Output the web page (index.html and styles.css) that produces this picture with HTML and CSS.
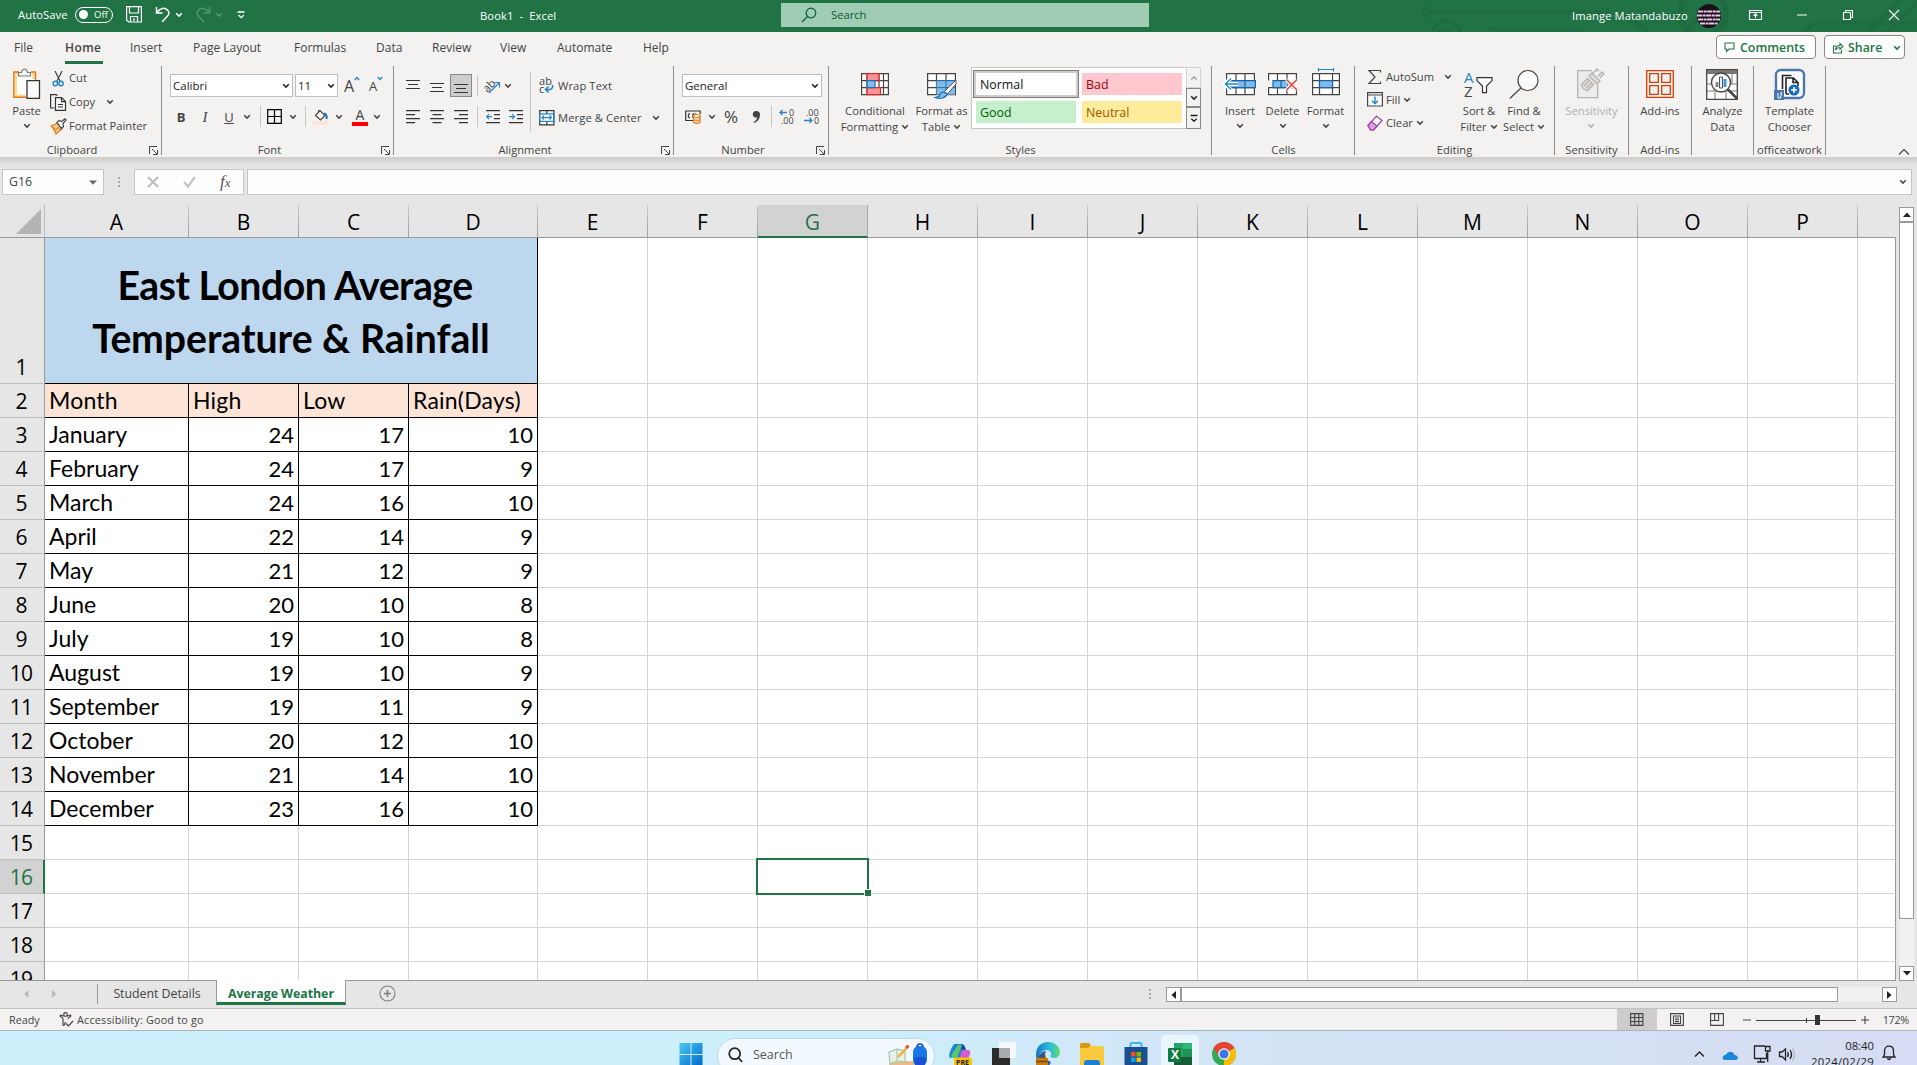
FILE: index.html
```html
<!DOCTYPE html>
<html lang="en">
<head>
<meta charset="utf-8">
<title>Book1 - Excel</title>
<link rel="stylesheet" href="styles.css">
</head>
<body>
<svg class="defs" width="0" height="0">
  <symbol id="chev" viewBox="0 0 8 6"><path d="M1.2 1.3 4 4.1 6.8 1.3" fill="none" stroke="currentColor" stroke-width="1.5"/></symbol>
  <symbol id="launch" viewBox="0 0 9 9"><path d="M.5 8V.5H8M3 3l5 5M8.500 4v4.500H4" fill="none" stroke="#444" stroke-width="1"/></symbol>
  <symbol id="lens" viewBox="0 0 16 16"><circle cx="10" cy="6" r="4.800" fill="none" stroke="currentColor" stroke-width="1.200"/><path d="M6.500 9.500 1 15" stroke="currentColor" stroke-width="1.200"/></symbol>
</svg>

<header class="title">
  <svg class="circuit" width="517" height="32" viewBox="1400 0 517 32" fill="none" stroke="#1f6b42" stroke-width="4">
    <circle cx="1426" cy="12" r="3.500" stroke-width="3"/><path d="M1431 12.500H1600M1497 31H1587"/><circle cx="1604" cy="12" r="4" stroke-width="3"/>
    <circle cx="1446" cy="36" r="15"/><path d="M1437 31h16"/><circle cx="1492" cy="31" r="3.500" stroke-width="3"/>
    <path d="M1622 13 1648 32" stroke-width="5"/><circle cx="1703" cy="13" r="23" stroke-width="6"/><path d="M1690 26l16-16h-12M1706 10v12"/>
    <path d="M1803 34l11-11H1917M1866 34l34-34M1885 34l34-34"/>
  </svg>
  <span class="autosave">AutoSave</span>
  <span class="toggle"><i></i>Off</span>
  <svg class="save" width="16" height="17" fill="none" stroke="#fff" stroke-width="1.200"><path d="M.6.6h14.800v15.400H2.600l-2-2zM3.500.6v6.400h9V.6M4.500 16v-5.500h7V16M8 12v3"/></svg>
  <svg class="undo" width="16" height="17" fill="none" stroke="#fff" stroke-width="1.500"><path d="M1.500 1v6h6M2 6.500C5 2 9.500 1 12.500 4c2 2.200 1.500 4.500 0 6L7 16"/></svg>
  <svg class="chev w1"><use href="#chev"/></svg>
  <svg class="undo redo" width="16" height="17" fill="none" stroke="#4f9770" stroke-width="1.500"><path d="M14.500 1v6h-6M14 6.500C11 2 6.500 1 3.500 4c-2 2.200-1.500 4.500 0 6L9 16"/></svg>
  <svg class="chev w2"><use href="#chev"/></svg>
  <svg class="qat" width="9" height="8" fill="none" stroke="#fff" stroke-width="1.300"><path d="M.5 1h7M1.500 4l2.700 2.700L7 4"/></svg>
  <span class="doc">Book1&nbsp; -&nbsp; Excel</span>
  <div class="search"><svg width="16" height="16"><use href="#lens"/></svg><span>Search</span></div>
  <span class="user">Imange Matandabuzo</span>
  <svg class="avatar" width="24" height="24"><defs><clipPath id="av"><circle cx="12" cy="12" r="12"/></clipPath></defs><g clip-path="url(#av)"><path fill="#17111a" d="M0 0h24v24H0z"/><path d="M1 7.500h22M0 11.500h24M1 15.500h22M3 19.500h18" stroke="#eac6e6" stroke-width="1.800" stroke-dasharray="5 .6 3 .5"/></g></svg>
  <svg class="wbtns" width="155" height="16" fill="none" stroke="#fff" stroke-width="1.100"><path d="M1.500 3.500h12v9h-12zM1.500 5.500h12M7.500 11V7M5.500 8.800l2-2 2 2M49 8h10M95.500 5.500h7v7h-7zM97.500 5.500v-2h7v7h-2M141 3l10 10M151 3l-10 10"/></svg>
</header>

<nav class="tabs">
  <div class="tablist"><span>File</span><b>Home</b><span>Insert</span><span>Page Layout</span><span>Formulas</span><span>Data</span><span>Review</span><span>View</span><span>Automate</span><span>Help</span></div>
  <div class="pill comments"><svg width="11" height="11" fill="none" stroke="#217346" stroke-width="1.100"><path d="M1 1h9v6H5L2.500 9.500V7H1z"/></svg>Comments</div>
  <div class="pill share"><svg width="12" height="12" fill="none" stroke="#217346" stroke-width="1.100"><path d="M4 4H1.500v7h8V8M3.500 8c.3-3 2-4.500 4.500-4.500V1.500L11 4.500 8 7.300V5.500C6 5.500 4.500 6.300 3.500 8z"/></svg>Share<svg class="chev"><use href="#chev"/></svg></div>
</nav>

<section class="ribbon">
  <div class="group g-clip">
    <div class="body">
      <div class="big paste"><svg width="28" height="31" fill="none"><path d="M1.500 5.500h20v23h-20z" fill="#fff"/><path d="M7 5.500H2.500v22.500H13M19 5.500h2V11" stroke="#f9dc9c" stroke-width="3"/><path d="M6 4H.8v25.200H13M18 4h4.500v8" stroke="#e07b1a" stroke-width="1.400"/><path d="M5.500 8V4.500h3C9 2 10 1 11.500 1s2.500 1 3 3.500h3V8z" fill="#f7f7f7" stroke="#777" stroke-width="1.200"/><path d="M14 12.700h12.500v17.600H14z" fill="#fafafa" stroke="#333" stroke-width="1.300"/></svg><span>Paste</span><svg class="chev"><use href="#chev"/></svg></div>
      <div class="stack">
        <div class="cmd"><svg width="17" height="17" fill="none"><path d="M5 1l5.500 11M12 1L6.500 12" stroke="#444" stroke-width="1.200"/><circle cx="5.300" cy="13.500" r="2.200" stroke="#2586c7" stroke-width="1.400"/><circle cx="11" cy="13.500" r="2.200" stroke="#2586c7" stroke-width="1.400"/></svg><span>Cut</span></div>
        <div class="cmd"><svg width="17" height="17" fill="none" stroke="#333" stroke-width="1.200"><path d="M4.500 14H.6V.6h5.800l1 1"/><path d="M5.500 3.600h6l4 4v8.800h-10z" fill="#fafafa"/><path d="M11.500 3.600v4h4M8 10.500h5M8 13h5"/></svg><span>Copy</span><svg class="chev gap"><use href="#chev"/></svg></div>
        <div class="cmd"><svg width="17" height="17" fill="none"><path d="M1 8l7-3 4 6-6 5c0-2-1-2.500-2-4l-1-2z" fill="#f6c98a" stroke="#e07b1a" stroke-width="1.200"/><path d="M3 9l3 3 2-3 2 3" stroke="#e07b1a"/><path d="M7 4.500l2-2 2.500 1L15 .8l1 1.200-3 3.500.5 3-2 2z" fill="#fff" stroke="#444" stroke-width="1.200"/></svg><span>Format Painter</span></div>
      </div>
    </div>
    <div class="label"><span>Clipboard</span><svg class="launch"><use href="#launch"/></svg></div>
  </div>

  <div class="group g-font">
    <div class="rows">
      <div class="row r1"><div class="combo"><span>Calibri</span><svg class="chev"><use href="#chev"/></svg></div><div class="combo"><span>11</span><svg class="chev"><use href="#chev"/></svg></div><div class="grow1">A<svg width="6" height="5" fill="none" stroke="#2586c7" stroke-width="1.300"><path d="M.8 4 3 1.500 5.200 4"/></svg></div><div class="grow2">A<svg width="6" height="5" fill="none" stroke="#2586c7" stroke-width="1.300"><path d="M.8 1 3 3.500 5.200 1"/></svg></div></div>
      <div class="row r2"><b>B</b><em>I</em><u>U</u><svg class="chev"><use href="#chev"/></svg><i class="vs"></i><svg width="15" height="15" fill="none" stroke="#000" stroke-width="1.200"><path d="M.7.7h13.600v13.600H.7zM7.500 1v13M1 7.500h13"/></svg><svg class="chev"><use href="#chev"/></svg><i class="vs"></i>
        <svg width="16" height="16" fill="none"><path d="M2.500 6.500 7 1.500l5 5-4.500 4.500zM5.500 3V1" stroke="#444" stroke-width="1.200"/><path d="M11 4.500c2 .5 3 2.500 2.500 5.500" stroke="#1f6fb5" stroke-width="2"/><path d="M0 12h16v4H0z" fill="#fce4d6"/></svg><svg class="chev"><use href="#chev"/></svg>
        <div class="fcol">A<i></i></div><svg class="chev"><use href="#chev"/></svg></div>
    </div>
    <div class="label"><span>Font</span><svg class="launch"><use href="#launch"/></svg></div>
  </div>

  <div class="group g-align">
    <div class="rows two">
      <div class="left">
        <div class="row r1"><svg width="14" height="14"><path d="M0 1.500h14M2 5.500h10M0 9.500h14" /></svg><svg width="14" height="14"><path d="M0 4.500h14M2 8.500h10M0 12.500h14"/></svg><div class="on"><svg width="14" height="14"><path d="M0 5.500h14M2 9.500h10M0 13.500h14"/></svg></div><i class="vs"></i>
          <svg width="17" height="16" class="orient"><text x="-1" y="11" transform="rotate(-45 6 8)" font-size="11">ab</text><path d="M5 15 15 5M10.500 4.500H15.500V9.500" style="stroke:#2586c7"/></svg><svg class="chev"><use href="#chev"/></svg></div>
        <div class="row r2"><svg width="14" height="14"><path d="M0 .7h14M0 4.700h9M0 8.700h14M0 12.700h9"/></svg><svg width="14" height="14"><path d="M0 .7h14M2.500 4.700h9M0 8.700h14M2.500 12.700h9"/></svg><svg width="14" height="14"><path d="M0 .7h14M5 4.700h9M0 8.700h14M5 12.700h9"/></svg><i class="vs"></i><svg width="14" height="14"><path d="M0 .7h14M8 4.700h6M8 8.700h6M0 12.700h14"/><path d="M.7 6.700H6M3 4.200.7 6.700 3 9.200" style="stroke:#2586c7"/></svg><svg width="14" height="14"><path d="M0 .7h14M8 4.700h6M8 8.700h6M0 12.700h14"/><path d="M0 6.700h5.500M3 4.200l2.500 2.500L3 9.200" style="stroke:#2586c7"/></svg></div>
      </div>
      <div class="right">
        <div class="cmd"><svg width="16" height="17" class="wrap"><text x="0" y="8" font-size="11">ab</text><text x="0" y="16" font-size="11">c</text><path d="M13.500 8c1 3-1 5-6 4.500M9.500 9.500l-3 3 3 3" style="stroke:#2586c7;stroke-width:1.600"/></svg><span>Wrap Text</span></div>
        <div class="cmd"><svg width="16" height="16"><path d="M.7.7h14.200v14.200H.7zM7.800.7v3M7.800 12v3" style="fill:#fff"/><path d="M.7 3.800h14.200v7.600H.7zM3 7.600h9.500M5 5.500 3 7.600l2 2.100M10.500 5.500l2 2.100-2 2.100" style="stroke:#2586c7"/></svg><span>Merge &amp; Center</span><svg class="chev gap"><use href="#chev"/></svg></div>
      </div>
    </div>
    <div class="label"><span>Alignment</span><svg class="launch"><use href="#launch"/></svg></div>
  </div>

  <div class="group g-num">
    <div class="rows">
      <div class="row r1"><div class="combo"><span>General</span><svg class="chev"><use href="#chev"/></svg></div></div>
      <div class="row r2"><svg width="17" height="14" fill="none"><path d="M8 10.500H.7V1h14.500v3M5 3.500c-2 0-2.500 4.500 0 4.500M8 8V4h3M8 6h2" stroke="#333" stroke-width="1.200"/><path d="M8.500 6.500v5c0 2.500 6.500 2.500 6.500 0v-5z" fill="#fbd9b0" stroke="#e07b1a" stroke-width="1.200"/><ellipse cx="11.800" cy="6" rx="3.400" ry="1.500" fill="#fff" stroke="#e07b1a" stroke-width="1.200"/><path d="M8.500 9c0 2 6.500 2 6.500 0" stroke="#e07b1a"/></svg><svg class="chev"><use href="#chev"/></svg><span class="pct">%</span>
        <svg width="9" height="14"><path d="M4 1a3.400 3.400 0 0 1 4 3.500C8 8.500 5.500 12 2 13l-.5-1C3.500 11 4.800 9.500 5 7.500 2.500 8 .8 6.500.8 4.400.8 2.500 2 1 4 1z" fill="#444"/></svg><i class="vs"></i>
        <svg width="17" height="18" class="dec"><text x="10" y="7.500">0</text><text x="2" y="16">.00</text><path d="M1 4.500h7M3.500 2 1 4.500 3.500 7"/></svg><svg width="17" height="18" class="dec"><text x="2" y="7.500">.00</text><text x="10" y="16">0</text><path d="M0 12.500h8M5.500 10 8 12.500 5.500 15"/></svg></div>
    </div>
    <div class="label"><span>Number</span><svg class="launch"><use href="#launch"/></svg></div>
  </div>

  <div class="group g-styles">
    <div class="body">
      <div class="big"><svg width="28" height="31" fill="none"><path d="M.6 5.600h26.800v21H.6zM.6 12.600h26.800M.6 19.600h26.800M6 5v21M18 5v21M22.500 5v21" fill="#fff" stroke="#444" stroke-width="1.200"/><path d="M6 5.600h12v7H6zM6 19.600h13.500v7H6z" fill="#ff9096" stroke="#d92b2b" stroke-width="1.200"/><path d="M6 12.600h8v7H6z" fill="#83bbe8" stroke="#1f6fb5" stroke-width="1.200"/></svg><span>Conditional</span><span>Formatting <svg class="chev"><use href="#chev"/></svg></span></div>
      <div class="big fat"><svg width="30" height="31" fill="none"><path d="M.6 5.600h27.800v21H.6zM.6 12.600h27.800M.6 19.600h27.800M9.500 5v21M19 5v21" fill="#fff" stroke="#444" stroke-width="1.200"/><path d="M9.500 12.600H28v14H9.500z" fill="#83bbe8"/><path d="M9.500 12.600H28M9.500 19.600H28M19 12v14" stroke="#1f6fb5"/><path d="M29 12 17.500 23.500l3 2.500L29 16z" fill="#fff" stroke="#555"/><path d="M17 24c-3 0-4 2-4.500 4L8 29.500c5 2 11 .500 12-3.500z" fill="#83bbe8" stroke="#1f6fb5" stroke-width="1.200"/></svg><span>Format as</span><span>Table <svg class="chev"><use href="#chev"/></svg></span></div>
      <div class="gallery">
        <div class="swatches"><div class="sw normal">Normal</div><div class="sw bad">Bad</div><div class="sw good">Good</div><div class="sw neutral">Neutral</div></div>
        <div class="gscroll"><div class="off"><svg class="chev up"><use href="#chev"/></svg></div><div><svg class="chev"><use href="#chev"/></svg></div><div><svg width="8" height="9" fill="none" stroke="#222" stroke-width="1.300"><path d="M.5 1.500h7M1.300 4.700 4 7.300l2.700-2.600"/></svg></div></div>
      </div>
    </div>
    <div class="label"><span>Styles</span></div>
  </div>

  <div class="group g-cells">
    <div class="body">
      <div class="big"><svg width="32" height="31" fill="none"><path d="M2.600 5.600h27.800v21H2.600zM2.600 12.600h27.800M2.600 19.600h27.800M12 5v21M21 5v21" fill="#fff" stroke="#444" stroke-width="1.200"/><path d="M6 12.600h25.400v7H6zM21 12.600v7" fill="#83bbe8" stroke="#1563a8" stroke-width="1.200"/><path d="M14 16H1.500M7 10 1 16l6 6" stroke="#fff" stroke-width="4"/><path d="M14 16H1.500M7 10.500 1.500 16 7 21.500" stroke="#2586c7" stroke-width="1.400"/></svg><span>Insert</span><svg class="chev"><use href="#chev"/></svg></div>
      <div class="big"><svg width="30" height="31" fill="none"><path d="M.6 26.600v-7h27.800v7zM.6 12.600v-7h27.800v7M9.500 5v21M19 5v21" fill="#fff" stroke="#444" stroke-width="1.200"/><path d="M5 12.600h15v7H5zM13 12.600v7" fill="#83bbe8" stroke="#1563a8" stroke-width="1.200"/><path d="M18.500 11.500 29 22M29 11.500 18.500 22" stroke="#f3f2f1" stroke-width="4"/><path d="M18.500 11.500 29 22M29 11.500 18.500 22" stroke="#e33c3c" stroke-width="1.400"/></svg><span>Delete</span><svg class="chev"><use href="#chev"/></svg></div>
      <div class="big"><svg width="28" height="31" fill="none"><path d="M.6 5.600h26.800v21H.6zM.6 12.600h26.800M.6 19.600h26.800M7.500 5v21M20.500 5v21" fill="#fff" stroke="#444" stroke-width="1.200"/><path d="M7.500 12.600h13v7h-13z" fill="#83bbe8" stroke="#1563a8" stroke-width="1.200"/><path d="M6.500 1.500h15M6.500 0v3.500M21.500 0v3.500" stroke="#2586c7" stroke-width="1.200"/></svg><span>Format</span><svg class="chev"><use href="#chev"/></svg></div>
    </div>
    <div class="label"><span>Cells</span></div>
  </div>

  <div class="group g-edit">
    <div class="body">
      <div class="stack">
        <div class="cmd"><svg width="16" height="16" fill="none" stroke="#444" stroke-width="1.200"><path d="M13.500 3.500V1.500H2L8 8l-6 6.500h11.500v-2"/></svg><span>AutoSum</span><svg class="chev gap"><use href="#chev"/></svg></div>
        <div class="cmd"><svg width="16" height="15" fill="none"><path d="M.6.6h14.800v13.400H.6zM.6 3h14.800" fill="#fff" stroke="#444" stroke-width="1.200"/><path d="M8 4.500v7M5 8.800l3 3 3-3" stroke="#2586c7" stroke-width="1.400"/></svg><span>Fill</span><svg class="chev"><use href="#chev"/></svg></div>
        <div class="cmd"><svg width="16" height="16" fill="none" stroke="#9b3fa5" stroke-width="1.200"><path d="M1 10.500 9.500 1l5.500 4.500L6.500 15h-3z" fill="#fff"/><path d="M1 10.500 4.500 6.500l5.500 4.500L6.500 15h-3z" fill="#dba0de"/></svg><span>Clear</span><svg class="chev"><use href="#chev"/></svg></div>
      </div>
      <div class="big sort"><svg width="30" height="31" fill="none"><text x="0" y="15" font-size="15" fill="#2586c7">A</text><text x="0" y="29" font-size="15" fill="#444">Z</text><path d="M13 9.600h15v3l-5.500 5.500v6.500h-4v-6.500L13 12.600z" fill="#fff" stroke="#333" stroke-width="1.200"/></svg><span>Sort &amp;</span><span>Filter <svg class="chev"><use href="#chev"/></svg></span></div>
      <div class="big find"><svg width="30" height="31" fill="none" stroke="#444" stroke-width="1.200"><circle cx="19" cy="12.500" r="10" fill="#fafafa"/><path d="M12 20 .8 30.500"/></svg><span>Find &amp;</span><span>Select <svg class="chev"><use href="#chev"/></svg></span></div>
    </div>
    <div class="label"><span>Editing</span></div>
  </div>

  <div class="group g-sens">
    <div class="body"><div class="big dim"><svg width="28" height="31" fill="none" stroke="#b5b3b1" stroke-width="1.300"><path d="M15 2.600H.7v27h20V17" fill="#ececec"/><path d="M4.500 16.500l6-6 6 6-6 6c-3 0-6-3-6-6zM7 18l5-5M9.500 20l5-5M12 8l3-3 8 8-3 3zM16 5l4-4 2 2M21 8l4-4 2 2-4 4" fill="#dedddc"/></svg><span>Sensitivity</span><svg class="chev"><use href="#chev"/></svg></div></div>
    <div class="label"><span>Sensitivity</span></div>
  </div>

  <div class="group g-add">
    <div class="body"><div class="big"><svg width="28" height="31" fill="none" stroke="#d83b01" stroke-width="1.300"><path d="M.7 2.700h26.600v26.600H.7zM3.700 5.700h8.600v8.600H3.700zM15.700 5.700h8.600v8.600h-8.600zM3.700 17.700h8.600v8.600H3.700zM15.700 17.700h8.600v8.600h-8.600z"/></svg><span>Add-ins</span></div></div>
    <div class="label"><span>Add-ins</span></div>
  </div>

  <div class="group g-ana">
    <div class="body"><div class="big"><svg width="32" height="33" fill="none"><path d="M.7 1.600h30.600v29.800H.7z" fill="#fff" stroke="#444" stroke-width="1.300"/><path d="M1 2h30v4H1z" fill="#777"/><path d="M1 16h5M1 23h30M25 16h6M9 24v7M20 24v7M26 6v10" stroke="#777"/><circle cx="15" cy="14.500" r="9.500" fill="#fff" stroke="#444" stroke-width="1.400"/><path d="M9.500 14h3v5h-3z" fill="#888"/><path d="M13.500 9h3v11h-3z" fill="#eee" stroke="#555"/><path d="M17.500 11h3v8h-3z" fill="#3a96dd"/><path d="M22 21.500l9 9" stroke="#444" stroke-width="2.500"/></svg><span>Analyze</span><span>Data</span></div></div>
    <div class="label"></div>
  </div>

  <div class="group g-tpl">
    <div class="body"><div class="big"><svg width="32" height="33" fill="none"><rect x="2" y="2" width="28" height="28" rx="5" fill="#fff" stroke="#4a78ad" stroke-width="2.400"/><path d="M8.500 21V7.500h9M12 26V10h7.500l4.500 4.500V18M12 26h3M19 10.500v4h5" stroke="#222" stroke-width="1.600"/><circle cx="20" cy="22" r="5.500" fill="#1368b8"/><path d="M20 19v6M17 22h6" stroke="#fff" stroke-width="1.600"/><path d="M0 22h10v10H0z" fill="#4a78ad"/><path d="M4 25v5h2.500l1-5M6 25h2" stroke="#fff"/></svg><span>Template</span><span>Chooser</span></div></div>
    <div class="label"><span>officeatwork</span></div>
  </div>
  <svg class="collapse" width="12" height="8" fill="none" stroke="#444" stroke-width="1.200"><path d="M1 6.500 6 1.500l5 5"/></svg>
</section>

<section class="fbar">
  <div class="box name"><span>G16</span><svg width="8" height="5"><path d="M0 .5h8L4 4.800z" fill="#666"/></svg></div>
  <i class="dots"></i>
  <div class="box fx"><svg width="12" height="12" fill="none" stroke="#bbb" stroke-width="1.800"><path d="M1 1l10 10M11 1 1 11"/></svg><svg width="13" height="12" fill="none" stroke="#c4c4c4" stroke-width="2.200"><path d="M1 6l4 4.500L12 1"/></svg><span>f<small>x</small></span></div>
  <div class="box formula"><svg class="chev"><use href="#chev"/></svg></div>
</section>

<main class="work">
  <div class="sheet" id="sheet"></div>
  <div class="vscroll"><div class="sbtn"><svg width="8" height="5"><path d="M0 5h8L4 .5z"/></svg></div><div class="thumb"></div><div class="sbtn"><svg width="8" height="5"><path d="M0 0h8L4 4.500z"/></svg></div></div>
</main>

<footer class="sheets">
  <div class="arrows"><svg width="30" height="8" fill="#b9b9b9"><path d="M4.500 0v8L0 4zM28 0v8l4.500-4z"/></svg></div>
  <span class="tab">Student Details</span><span class="tab active">Average Weather</span>
  <svg class="plus" width="17" height="17" fill="none" stroke="#808080"><circle cx="8.500" cy="8.500" r="7.500" stroke-width="1.100"/><path d="M8.500 5v7M5 8.500h7" stroke-width="1.700"/></svg>
  <i class="dots"></i>
  <div class="hscroll"><div class="sbtn"><svg width="5" height="8"><path d="M5 0v8L.5 4z"/></svg></div><div class="thumb"></div><div class="sbtn"><svg width="5" height="8"><path d="M0 0v8l4.500-4z"/></svg></div></div>
</footer>

<footer class="status">
  <span class="ready">Ready</span>
  <svg class="acc" width="15" height="15" fill="none" stroke="#444" stroke-width="1.200"><circle cx="6.500" cy="2.500" r="1.800"/><path d="M1 3.500c0 2 3 1.500 3 3.500v6c1 1 2 0 2-3M12 3.500c0 2-3 1.500-3 3.500M1 3.500c1-1 2 .5 4 .5M12 3.500c-1-1-2 .5-4 .5M7 11.500l2.500 2.500 4.500-5"/></svg>
  <span class="acct">Accessibility: Good to go</span>
  <div class="view on"><svg width="14" height="13"><path d="M.6.6h12.300v11.800H.6zM4.700.6v12M8.800.6v12M.6 4.500h12.300M.6 8.500h12.300"/></svg></div>
  <div class="view"><svg width="14" height="13"><path d="M.6.6h12.800v11.800H.6zM3.500 3h7v7.500h-7zM5 5h4M5 6.800h4M5 8.600h4"/></svg></div>
  <div class="view"><svg width="14" height="13"><path d="M.6.6h12.800v11.800H.6zM.6 7.500h8V.6M4.700.6v7"/></svg></div>
  <svg class="zoom" width="130" height="14"><path d="M3 7h8M121 7h8M125 3v8M16 7.500h100M66.500 5v5"/><path d="M75 2h5v10h-5z" fill="#333" stroke="none"/></svg>
  <span class="pctz">172%</span>
</footer>

<footer class="taskbar">
  <svg class="ti win" width="24" height="24"><defs><linearGradient id="wg" x2="1" y2="1"><stop stop-color="#4cc8f5"/><stop offset="1" stop-color="#0067c8"/></linearGradient></defs><path fill="url(#wg)" d="M.5 1h11v11H.5zM12.500 1h11v11h-11zM.5 13h11v11H.5zM12.500 13h11v11h-11z"/></svg>
  <div class="tsearch"><svg width="15" height="16" fill="none" stroke="#222" stroke-width="1.700"><circle cx="6.700" cy="6.700" r="5.500"/><path d="M10.500 10.800 14 15"/></svg><span>Search</span>
    <svg width="44" height="26" fill="none"><path d="M0 26c3-6 12-8 22-8s18 3 22 8z" fill="#e8bb8c"/><path d="M4 9l8-3 8 2v11l-8-1-7 3z" fill="#e9f0e8" stroke="#9cc498" stroke-width="1.100"/><path d="M12 6v12" stroke="#9cc498"/><path d="M13 14 23 4" stroke="#f3b13c" stroke-width="2.400"/><path d="M21 5l2.500-2.500" stroke="#e2543a" stroke-width="3"/><rect x="28" y="3" width="14" height="20" rx="6" fill="#1877e6"/><path d="M32 4c0-4 6-4 6 0" stroke="#0b4fb0" stroke-width="1.500"/><rect x="29.500" y="14" width="11" height="8" rx="2" fill="#1b4fd6"/></svg></div>
  <svg class="ti" width="24" height="24"><path d="M6 2h8l2 6-4 8H2C0 14 2 8 6 2z" fill="#1c86d9"/><path d="M4 12l6-9h4L9 16H3z" fill="#5ec66a"/><path d="M14 8h7c2 1 1 5-1 9h-9z" fill="#d65bd0"/><path d="M14 2c2 0 3 2 4 6h-5z" fill="#1450a8"/><rect x="6" y="15.500" width="18" height="9" rx="2" fill="#fdc500"/><text x="8" y="22.500" font-size="7" font-weight="700" fill="#222">PRE</text></svg>
  <svg class="ti" width="24" height="24"><path d="M7 0h17v16H7z" fill="#f6f8fa"/><path d="M0 6h18v18H0z" fill="#2b2b2b"/><path d="M7 6h11v10H7z" fill="#a9abad"/></svg>
  <svg class="ti" width="24" height="24"><defs><linearGradient id="eg" x2="1"><stop stop-color="#1577cf"/><stop offset=".6" stop-color="#2fc0d8"/><stop offset="1" stop-color="#5fdc6a"/></linearGradient></defs><path d="M0 13C0 5 5 0 12 0s12 5 12 10c0 4-3 6-6 6s-4-1-3-3-1-5-5-5S3 12 3 17v7C1 21 0 17 0 13z" fill="url(#eg)"/><path d="M3 17c0-5 3-8 7-8-2 3-1 9 5 11l-2 4H4z" fill="#1c5fb0"/><path d="M0 16h12v8H0z" fill="#c97a10"/><path d="M3.500 16v-2h5v2M0 19.500h12" fill="none" stroke="#7a4705" stroke-width="1.300"/></svg>
  <svg class="ti" width="24" height="24"><path d="M0 3c0-1 .5-2 2-2h7l2.500 3H22c1.500 0 2 1 2 2v18H0z" fill="#fbc93d"/><path d="M0 6V3c0-1 .5-2 2-2h7l1.500 2.500L8 6z" fill="#d89a12"/><path d="M4 24v-3c0-2 1-3 3-3h10c2 0 3 1 3 3v3z" fill="#1a7fd0"/></svg>
  <svg class="ti" width="24" height="24"><path d="M6.500 5V2.500c0-1 .5-1.500 1.500-1.500h8c1 0 1.500.5 1.500 1.500V5" fill="none" stroke="#35b6ee" stroke-width="2"/><path d="M.5 5h23v17c0 1-1 2-2 2h-19c-1 0-2-1-2-2z" fill="#1a4f8f"/><path d="M7 10h4.500v4.500H7z" fill="#f25022"/><path d="M12.500 10H17v4.500h-4.500z" fill="#7fba00"/><path d="M7 15.500h4.500V20H7z" fill="#00a4ef"/><path d="M12.500 15.500H17V20h-4.500z" fill="#ffb900"/></svg>
  <div class="ti excel"><svg width="24" height="24"><path d="M6 1h18v6H6z" fill="#2fb574"/><path d="M6 7h18v8H6z" fill="#1f9256"/><path d="M6 15h18v9H6z" fill="#185c37"/><path d="M6 1h9v14H6z" fill="#21a366"/><rect y="6" width="13" height="14" rx="1" fill="#107c41"/><text x="3" y="17" font-size="12" font-weight="700" fill="#fff">X</text></svg></div>
  <svg class="ti" width="24" height="24"><circle cx="12" cy="12" r="12" fill="#34a853"/><path d="M12 12 1.600 6A12 12 0 0 1 22.400 6z" fill="#ea4335"/><path d="M12 12 22.400 6A12 12 0 0 1 12 24z" fill="#fbbc04"/><path d="M1.600 6 12 6h10.400L12 6.500 7 15z" fill="#ea4335"/><circle cx="12" cy="12" r="5.800" fill="#fff"/><circle cx="12" cy="12" r="4.600" fill="#3b78e7"/></svg>
  <svg class="tray" width="100" height="20" fill="none" stroke="#222" stroke-width="1.300"><path d="M1 12.500 5.500 8l4.500 4.500"/><path d="M31 16c-3 0-3.500-5 1-5.200 1.500-4.200 7.500-4 8.500.2 4 0 4.500 5 1 5z" fill="#1a86dc" stroke="none"/><path d="M71 2H60.500v12.500H72.500V9M63 18h8M66.500 15v3"/><path d="M71.500 2.500h4.500v4.500h-4.500zM73.700 7.500V18"/><path d="M85.500 8v4.500H88l3.500 3.500V5L88 8zM93.500 8c1 1.500 1 3.500 0 5M96 6c2 3 2 6 0 9"/><path d="M98.500 4.500c2.300 4 2.300 8 0 12" stroke="#aaa" stroke-width="1"/></svg>
  <div class="clock"><span>08:40</span><span>2024/02/29</span></div>
  <svg class="bell" width="14" height="16" fill="none" stroke="#222" stroke-width="1.300"><path d="M1 12h12l-1.500-2.500V6C11.500 3 9.500 1.200 7 1.200S2.500 3 2.500 6v3.500zM5.500 13c.5 2 2.500 2 3 0"/></svg>
</footer>
<script src="sheet.js"></script>
</body>
</html>
```
FILE: sheet.js
```js
const rows = [
  ["Month", "High", "Low", "Rain(Days)"],
  ["January", 24, 17, 10], ["February", 24, 17, 9], ["March", 24, 16, 10],
  ["April", 22, 14, 9], ["May", 21, 12, 9], ["June", 20, 10, 8],
  ["July", 19, 10, 8], ["August", 19, 10, 9], ["September", 19, 11, 9],
  ["October", 20, 12, 10], ["November", 21, 14, 10], ["December", 23, 16, 10]
];
const sheet = document.getElementById("sheet");
function cell(cls, text) {
  const d = document.createElement("div");
  d.className = cls;
  if (text !== undefined) d.textContent = text;
  sheet.appendChild(d);
  return d;
}
const letters = "ABCDEFGHIJKLMNOP";
cell("corner");
for (const l of letters) cell("col" + (l === "G" ? " sel" : ""), l);
cell("col last");
for (let r = 1; r <= 19; r++) {
  cell("num" + (r === 1 ? " first" : "") + (r === 16 ? " sel" : "") + (r === 19 ? " cut" : ""), r);
  let c = 0;
  if (r === 1) { cell("c heading", "East London Average Temperature & Rainfall"); c = 4; }
  for (; c < 17; c++) {
    const data = rows[r - 2];
    if (data && c < 4) {
      const v = data[c];
      cell("c data" + (r === 2 ? " peach" : "") + (typeof v === "number" ? " n" : ""), v);
    } else {
      const d = cell("c" + (c === 16 ? " edge" : ""));
      if (r === 16 && c === 6) {
        d.classList.add("active");
        d.innerHTML = '<i class="cursor"></i>';
      }
    }
  }
}
```
FILE: styles.css
```css
* { box-sizing: border-box; }
body { margin: 0; width: 1917px; height: 1065px; overflow: hidden; display: flex; flex-direction: column; font: 11.2px/16px "Open Sans", "Noto Sans", sans-serif; color: #444; background: #e6e6e6; white-space: nowrap; }
svg { flex: none; display: block; overflow: visible; }
.defs { position: absolute; }
.chev { width: 8px; height: 6px; }
.big > svg.chev { margin: 4px auto 0; }

.title { height: 32px; background: #217346; color: #fff; display: flex; align-items: center; padding: 0 0 3px 18px; position: relative; flex: none; }
.circuit { position: absolute; right: 0; top: 0; overflow: hidden; }
.autosave { width: 57px; letter-spacing: .1px; }
.toggle { width: 38px; height: 16px; border: 1px solid #fff; border-radius: 8px; display: flex; align-items: center; font-size: 9.5px; margin-right: 13px; }
.toggle i { width: 9px; height: 9px; border-radius: 50%; background: #fff; margin: 0 6px 0 3px; }
.undo { margin-left: 13px; }
.w1 { margin-left: 4px; }
.redo { margin-left: 12px; }
.w2 { margin-left: 4px; color: #4f9770; }
.qat { margin-left: 14px; }
.doc { margin-left: 234px; width: 301px; padding-top: 3px; letter-spacing: .1px; }
.search { width: 368px; height: 24px; margin-top: 1px; background: #9fcdb3; color: #0e5a30; display: flex; align-items: center; padding-left: 20px; gap: 14px; }
.user { margin-left: 423px; width: 125px; padding-top: 3px; position: relative; letter-spacing: .1px; }
.avatar { margin-top: 2px; position: relative; }
.wbtns { margin-left: 27px; position: relative; }

.tabs { height: 33px; background: #f3f2f1; display: flex; flex: none; padding: 3px 12px 0 14px; }
.tablist { display: grid; grid-template-columns: 51px 65px 63px 101px 82px 56px 68px 57px 86px 40px; font-size: 12px; width: 1702px; height: 25px; line-height: 26px; }
.tablist b { font-weight: 600; width: 38px; border-bottom: 3px solid #217346; letter-spacing: .4px; }
.pill { height: 24px; border: 1px solid #8a8886; border-radius: 4px; background: #fff; color: #217346; font-weight: 600; font-size: 12.4px; display: flex; align-items: center; padding-top: 1px; }
.comments { width: 100px; padding-left: 7px; gap: 5px; margin-right: 8px; }
.share { width: 81px; padding-left: 7px; gap: 4px; }
.share .chev { margin-left: 7px; }

.ribbon { height: 93px; flex: none; background: #f3f2f1; display: flex; border-bottom: 1px solid #d0cecc; }
.group { height: 89px; margin-top: 1px; border-right: 1px solid #8f8d8b; display: flex; flex-direction: column; flex: none; }
.body { display: flex; height: 76px; }
.rows { height: 76px; padding-top: 8px; }
.label { display: flex; justify-content: center; position: relative; height: 13px; line-height: 16px; }
.g-clip .label, .g-align .label { padding-right: 17px; }
.g-font .label, .g-num .label { padding-right: 16px; margin-left: -8px; }
.g-cells .label { padding-right: 6px; }
.launch { width: 9px; height: 9px; position: absolute; right: 3px; top: 4px; }
.big { display: flex; flex-direction: column; align-items: center; padding-top: 2px; }
.big > span { display: flex; gap: 3px; align-items: center; }
.big > svg:first-child { height: 35px; }
.cmd { display: flex; align-items: center; height: 24px; gap: 2px; }
.cmd .chev { margin-left: 3px; }
.row { display: grid; align-items: center; justify-items: center; height: 23px; }
.r1 + .r2, .row.r2 { margin-top: 8px; }
.vs { width: 1px; height: 21px; background: #c8c6c4; }
.combo { justify-self: start; width: 100%; height: 23px; border: 1px solid #c0bebc; background: #fff; display: flex; align-items: center; justify-content: space-between; padding: 0 2px; color: #222; font-size: 11.5px; }

.g-clip { width: 162px; }
.paste { width: 50px; padding-left: 3px; }
.g-clip .stack { display: flex; flex-direction: column; }
.g-clip .cmd .gap { margin-left: 9px; }
.g-font { width: 232px; padding-left: 8px; }
.g-font .r1 { grid-template-columns: 123px 43px 24px 20px; column-gap: 2px; }
.grow1, .grow2 { display: flex; font-size: 16px; line-height: 20px; }
.grow2 { font-size: 13px; }
.g-font .r2 { grid-template-columns: 22px 26px 22px 13px 14px 15px 22px 3px 27px 10px 32px 2px; font-size: 13px; justify-content: start; }
.r2 em { font-family: "Liberation Serif", serif; font-size: 15px; }
.fcol { height: 18px; width: 16px; text-align: center; line-height: 14px; font-size: 14px; }
.fcol i { display: block; height: 4px; background: #f00; }
.g-align { width: 280px; }
.g-align svg:not(.chev):not(.launch) { fill: none; stroke: #333; stroke-width: 1.2; }
.g-align text, .dec text { fill: #444; stroke: none; }
.two { display: flex; }
.left { width: 137px; padding-left: 7px; border-right: 1px solid #c8c6c4; height: 60px; margin-top: -2px; padding-top: 2px; }
.left .row { grid-template-columns: 24px 24px 24px 9px 21px 10px; justify-content: start; }
.left .r2 { grid-template-columns: 24px 24px 24px 9px 21px 26px; }
.on { width: 22px; height: 23px; background: #cfcdcb; border: 1px solid #8a8886; display: grid; place-items: center; }
.right { padding-left: 8px; margin-top: -1px; letter-spacing: .1px; }
.right .cmd { height: 25px; gap: 3px; }
.right .cmd + .cmd { margin-top: 7px; }
.right .gap { margin-left: 7px; }
.g-num { width: 155px; padding-left: 8px; }
.g-num .r1 { grid-template-columns: 140px; }
.g-num .r2 { grid-template-columns: 22px 16px 22px 28px 2px 30px 20px; justify-content: start; column-gap: 0; }
.pct { font-size: 17px; }
.dec text { font-size: 9px; }
.dec path { fill: none; stroke: #2586c7; stroke-width: 1.3; }
.g-styles { width: 383px; padding-left: 1px; }
.g-styles .big { width: 90px; }
.g-styles .fat { width: 43px; }
.gallery { width: 230px; height: 62px; margin: 1px 0 0 8px; border: 1px solid #c8c6c4; background: #fff; display: flex; }
.swatches { display: grid; grid-template-columns: 106px 100px; column-gap: 3px; row-gap: 3px; padding: 2px 0 0 1px; grid-template-rows: 28px 22px; align-items: center; }
.sw { height: 22px; line-height: 23px; padding-left: 4px; font-size: 12.4px; }
.normal { height: 28px; border: 1px solid #7c7a78; outline: 2px solid #cfcdcb; outline-offset: -3px; line-height: 28px; padding-left: 6px; color: #111; }
.bad { background: #ffc7ce; color: #9c0006; }
.good { background: #c6efce; color: #006100; margin-left: 3px; width: 100px; }
.neutral { background: #ffeb9c; color: #9c5700; }
.gscroll { width: 15px; margin: -1px -1px 0 auto; height: 62px; display: grid; grid-template-rows: 21px 19px 22px; color: #222; }
.gscroll div { border: 1px solid #8a8886; background: #f3f2f1; display: grid; place-items: center; }
.gscroll .off { border-color: #d5d3d1; color: #aaa; }
.up { transform: scaleY(-1); }
.g-cells { width: 143px; padding-left: 7px; }
.g-cells .big { width: 42px; }
.g-cells .big + .big { width: 43px; }
.g-edit { width: 200px; }
.g-edit .stack { padding-left: 12px; width: 101px; margin-top: -1px; }
.g-edit .cmd { height: 23px; gap: 3px; }
.g-edit .cmd .chev { margin-left: 0; }
.g-edit .cmd .gap { margin-left: 7px; }
.sort { width: 46px; }
.find { width: 44px; }
.g-sens { width: 74px; }
.g-add { width: 63px; }
.g-ana { width: 62px; }
.g-tpl { width: 72px; }
.g-sens .body, .g-add .body, .g-ana .body, .g-tpl .body { justify-content: center; }
.dim { color: #b1afad; }
.collapse { margin: 83px 0 0 72px; }

.fbar { height: 47px; flex: none; background: linear-gradient(#cfcecd, #e6e6e6 8px); display: flex; padding: 11px 0 0 2px; }
.box { height: 26px; background: #fdfdfd; border: 1px solid #c6c6c6; display: flex; align-items: center; }
.name { width: 102px; justify-content: space-between; padding: 0 6px; font-size: 12.4px; }
.dots { width: 2px; height: 10px; margin: 8px 14px 0 14px; background: repeating-linear-gradient(#aaa 0 2px, transparent 2px 4px); }
.fx { width: 110px; padding-left: 12px; gap: 24px; }
.fx span { font: italic 17px/20px "Liberation Serif", serif; color: #555; }
.fx small { font-size: 13px; }
.formula { width: 1665px; margin-left: 3px; justify-content: flex-end; padding-right: 4px; }

.work { height: 776px; flex: none; display: flex; }
.sheet { display: grid; width: 1896px; height: 776px; grid-template-columns: 45px 144px 110px 110px 129px repeat(12, 110px) 38px; grid-template-rows: 33px 146px repeat(17, 34px) 19px; overflow: hidden; color: #000; border-bottom: 1px solid #999; }
.corner { border-bottom: 1px solid #999; background: linear-gradient(to right, transparent 43.500px, #bbb 44px); display: grid; justify-items: end; align-items: end; padding: 0 4px 3px 0; }
.corner::after { content: ""; width: 25px; height: 25px; background: #b4b4b4; clip-path: polygon(100% 0, 100% 100%, 0 100%); }
.col { border-bottom: 1px solid #999; border-right: 1px solid; border-image: linear-gradient(#ccc, #999) 1; border-top: 0; border-left: 0; text-align: center; font-size: 21px; line-height: 34px; }
.col.sel { background: #d2d2d2; color: #217346; border-image: none; border-right-color: #aaa; border-bottom: 2px solid #217346; }
.col.last { border-right: 0; }
.num { border-right: 1px solid #999; border-bottom: 1px solid #bdbdbd; text-align: center; font-size: 21px; line-height: 34px; letter-spacing: -.8px; padding-right: 2px; }
.num.first { padding-top: 112px; }
.num.cut { border-bottom: 0; overflow: hidden; }
.num.sel { background: #d2d2d2; color: #217346; border-right: 2px solid #217346; padding-right: 1px; }
.c { background: #fff; border-right: 1px solid #d4d4d4; border-bottom: 1px solid #d4d4d4; }
.c.edge { border-right-color: #999; }
.heading { grid-column: span 4; background: #bdd7ee; border-color: #000; display: block; padding: 20px 30px 0; text-align: center; text-indent: 8px; font: 700 39.2px/53px Lato, sans-serif; white-space: normal; }
.heading::first-line { letter-spacing: -.5px; }
.data { border-color: #000; font: 23px/33px Lato, sans-serif; padding: 0 4px 0 4px; }
.peach { background: #fce4d6; letter-spacing: .2px; }
.n { text-align: right; font-size: 22px; }
.active { position: relative; }
.cursor { position: absolute; inset: -2px; border: 2px solid #217346; }
.cursor::after { content: ""; position: absolute; right: -4px; bottom: -3px; width: 6px; height: 6px; background: #217346; border: 1px solid #fff; border-width: 1px 0 0 1px; }
.vscroll { width: 15px; margin: 2px 0 0 3px; display: flex; flex-direction: column; background: #f1f1f1; }
.sbtn { width: 15px; height: 15px; border: 1px solid #999; background: #fff; display: grid; place-items: center; flex: none; fill: #222; }
.thumb { border: 1px solid #999; background: #fff; }
.vscroll .thumb { height: 697px; }
.vscroll .sbtn:last-child { margin-top: auto; }

.sheets { height: 28px; flex: none; display: flex; border-bottom: 1px solid #c3c3c3; font-size: 12.4px; }
.arrows { width: 98px; height: 20px; margin-top: 3px; border-right: 1px solid #999; padding: 6px 0 0 24px; }
.tab { width: 118px; text-align: center; line-height: 26px; padding-left: 0; letter-spacing: -.05px; }
.tab.active { width: 130px; height: 25px; margin-top: -1px; background: #fff; color: #217346; font-weight: 700; border: 1px solid #999; border-top: 0; border-bottom: 3px solid #217346; letter-spacing: -.06px; line-height: 28px; }
.plus { margin: 4px 0 0 33px; }
.sheets .dots { margin: 8px 0 0 753px; }
.hscroll { margin: 6px 0 0 15px; width: 731px; height: 15px; background: #f1f1f1; display: flex; }
.hscroll .thumb { width: 657px; }
.hscroll .sbtn:last-child { margin-left: auto; }

.status { height: 22px; flex: none; background: #f3f2f1; border-bottom: 1px solid #a9b6bd; display: flex; align-items: center; font-size: 10.8px; line-height: 15px; padding-left: 9px; }
.ready { width: 50px; }
.acct { margin-left: 3px; width: 1540px; letter-spacing: .2px; }
.view { width: 40px; height: 22px; display: grid; place-items: center; }
.view.on { width: 40px; height: 21px; background: #cfcdcb; border: 0; }
.view svg, .zoom { fill: none; stroke: #444; stroke-width: 1.1; }
.zoom { margin-left: 3px; }
.pctz { margin-left: auto; padding-right: 8px; letter-spacing: -.3px; }

.taskbar { height: 34px; flex: none; background: linear-gradient(90deg, #cdeefb 0, #cdeefb 45%, #d2e4f5 65%, #d6dcf3); display: flex; padding-left: 679px; overflow: hidden; color: #222; }
.ti { margin: 11px 20px 0 0; }
.win { margin-right: 14px; }
.tsearch { width: 218px; height: 36px; margin: 7px 13px 0 0; border: 1px solid #bfdbe8; border-radius: 18px; background: #f1f9fe; display: flex; padding: 8px 5px 0 10px; font-size: 12.500px; color: #555; }
.tsearch span { margin: 0 auto 0 10px; line-height: 15px; }
.tsearch svg:last-child { margin-top: -4px; }
.excel { width: 38px; height: 36px; margin: 4px 13px 0 -7px; background: #eaf4fc; border-radius: 4px; padding: 7px 7px; }
.tray { margin: 13px 0 0 438px; }
.clock { margin-left: auto; width: 80px; display: flex; flex-direction: column; text-align: right; line-height: 16px; padding-top: 7px; font-size: 11.3px; }
.clock span:last-child { letter-spacing: .3px; }
.bell { margin: 14px 21px 0 8px; }
```
